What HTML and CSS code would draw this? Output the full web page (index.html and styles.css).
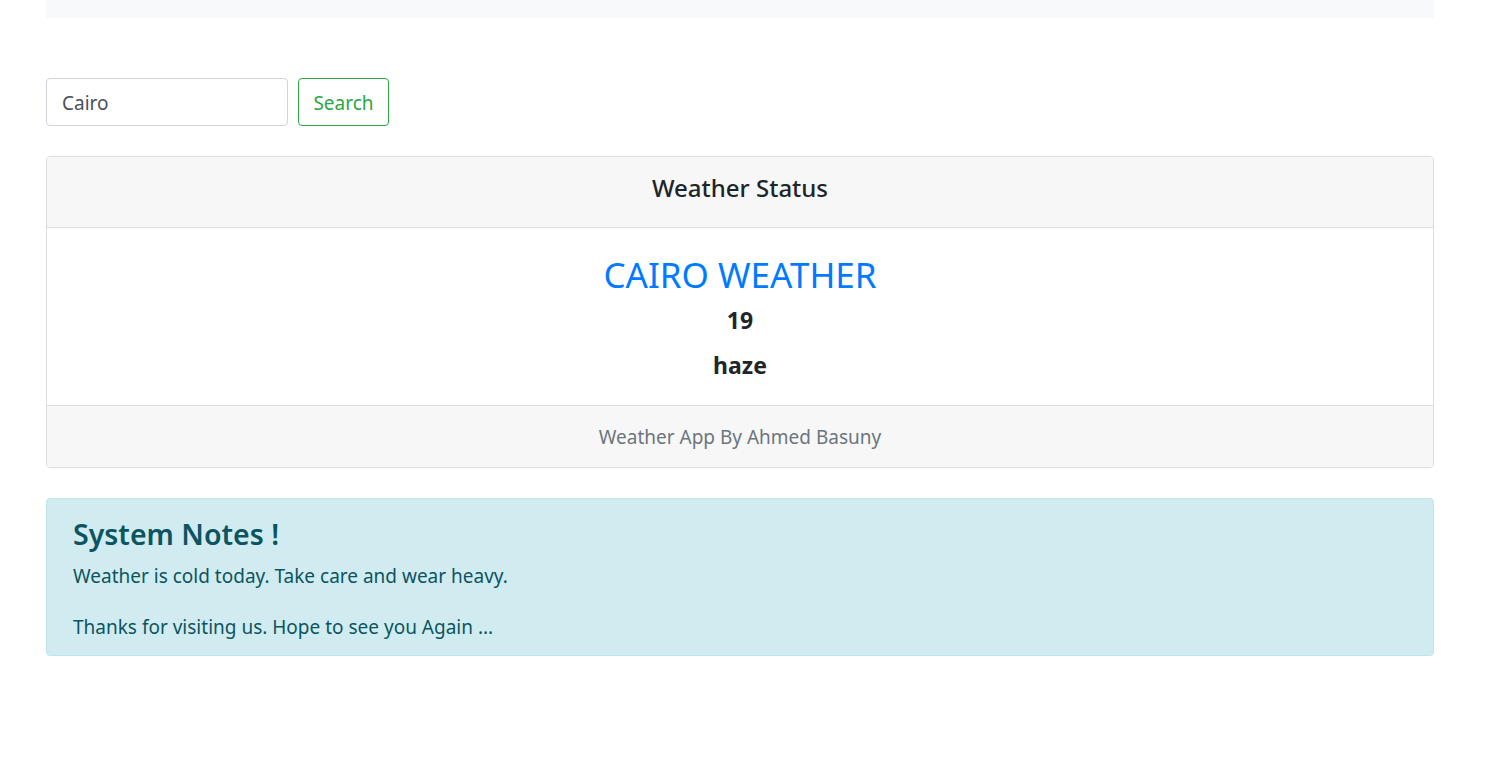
FILE: index.html
```html
<!DOCTYPE html>
<html lang="en">
<head>
<meta charset="utf-8">
<title>Weather App</title>
<link rel="stylesheet" href="styles.css">
</head>
<body>
<div class="page">
  <div class="topbar"></div>
  <form class="search">
    <input class="search-input" type="text" value="Cairo">
    <button class="search-btn" type="button">Search</button>
  </form>
  <section class="card">
    <header class="card-header"><h4 class="card-title">Weather Status</h4></header>
    <div class="card-body">
      <h2 class="city">CAIRO WEATHER</h2>
      <h4 class="temp">19</h4>
      <h4 class="desc">haze</h4>
    </div>
    <footer class="card-footer">Weather App By Ahmed Basuny</footer>
  </section>
  <section class="alert">
    <h3 class="alert-heading">System Notes !</h3>
    <p class="note">Weather is cold today. Take care and wear heavy.</p>
    <p class="note note-last">Thanks for visiting us. Hope to see you Again ...</p>
  </section>
</div>
</body>
</html>
```

FILE: styles.css
```css
* { box-sizing: border-box; }
html, body { margin: 0; padding: 0; background: #fff; }
body {
  font-family: "Noto Sans", "Open Sans", sans-serif;
  color: #212529;
  font-size: 18px;
  line-height: 1.5;
}
.page {
  margin-left: 46px;
  width: 1388px;
}
.topbar {
  height: 18px;
  background: #f8f9fa;
}
.search {
  display: flex;
  gap: 10px;
  margin-top: 60px;
}
.search-input {
  width: 242px;
  height: 48px;
  padding: 2px 15px 0;
  border: 1px solid #ced4da;
  border-radius: 4px;
  font-family: inherit;
  font-size: 19px;
  color: #495057;
  outline: none;
}
.search-btn {
  width: 91px;
  height: 48px;
  padding: 2px 0 0;
  border: 1px solid #28a745;
  border-radius: 4px;
  background: #fff;
  color: #28a745;
  font-family: inherit;
  font-size: 19px;
}
.card {
  margin-top: 30px;
  border: 1px solid #dcdcdc;
  border-radius: 4px;
  overflow: hidden;
}
.card-header {
  height: 71px;
  padding-top: 16px;
  background: #f7f7f7;
  border-bottom: 1px solid #dcdcdc;
  text-align: center;
}
.card-title {
  margin: 0;
  font-size: 24px;
  line-height: 29px;
  font-weight: 500;
}
.card-body {
  padding: 28px 20px 25px;
  text-align: center;
}
.city {
  margin: 0 0 12px;
  font-size: 35px;
  line-height: 38px;
  font-weight: 400;
  color: #007bff;
}
.temp, .desc {
  margin: 0;
  font-size: 23px;
  line-height: 29px;
  font-weight: 700;
}
.temp { margin-bottom: 16px; }
.card-footer {
  height: 62px;
  padding-top: 18px;
  background: #f7f7f7;
  border-top: 1px solid #dcdcdc;
  text-align: center;
  color: #6c757d;
  font-size: 19px;
  line-height: 27px;
}
.alert {
  margin-top: 30px;
  height: 158px;
  padding: 18px 26px 0;
  background: #d1ecf1;
  border: 1px solid #bee5eb;
  border-radius: 4px;
  color: #0c5460;
}
.alert-heading {
  margin: 0 0 12px;
  font-size: 28.5px;
  line-height: 34px;
  font-weight: 600;
}
.note {
  margin: 0 0 24px;
  font-size: 19px;
  line-height: 27px;
}
.note-last { margin-bottom: 0; }
```
